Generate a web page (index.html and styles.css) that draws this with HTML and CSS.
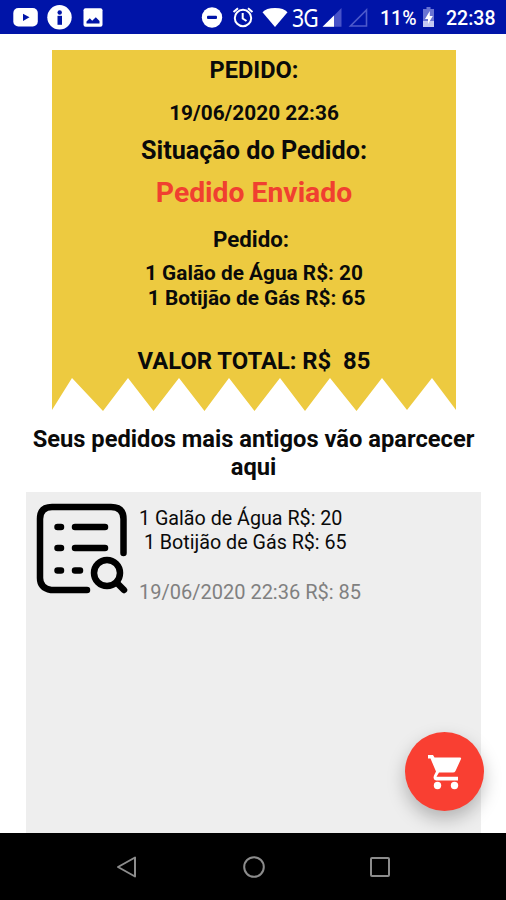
FILE: index.html
```
<!DOCTYPE html>
<html lang="pt-BR">

<head>
    <meta charset="UTF-8">
    <meta name="viewport" content="width=device-width, initial-scale=1.0">
    <title>Pedidos</title>
    <link rel="stylesheet" href="styles.css">
</head>

<body>
    <div class="app">
        <header class="status-bar">
            <svg class="status-left" width="110" height="34" viewBox="0 0 110 34">
                <rect x="13.3" y="8" width="24.5" height="18.5" rx="5" fill="#fff"/>
                <path d="M23 13.7v7.2l6.5-3.6z" fill="#0014a8"/>
                <circle cx="59.5" cy="17.3" r="12.2" fill="#fff"/>
                <circle cx="59.7" cy="12.5" r="2.2" fill="#0014a8"/>
                <path d="M57.5 15.8h4.5v9h-4.5z" fill="#0014a8"/>
                <rect x="83.5" y="8.3" width="19" height="18.5" rx="2" fill="#fff"/>
                <path d="M86.5 23.5v-2l3.3-3.2 2.4 2.4 3.6-3.4 3.7 3.7v2.5z" fill="#0014a8"/>
            </svg>

            <div class="status-right">
                <svg width="88" height="34" viewBox="200 0 88 34">
                    <circle cx="212" cy="17.5" r="10.2" fill="#fff"/>
                    <rect x="207" y="15.8" width="10" height="3.2" rx="1" fill="#0014a8"/>
                    <g fill="none" stroke="#fff" stroke-width="2">
                        <circle cx="243" cy="18" r="8.2"/>
                        <path d="M233.5 12l4.5-3.8M252.5 12l-4.5-3.8"/>
                        <path d="M242.7 13v5.5l3.8 2.5"/>
                    </g>
                    <path d="M275 27L262.5 12.3Q266 8 275 8T287.5 12.3Z" fill="#fff"/>
                </svg>
                <span class="network">3G</span>
                <svg class="signal" width="50" height="34" viewBox="320 0 50 34">
                    <path d="M341.5 8v18.7H323z" fill="#4853c8"/>
                    <path d="M334 15.6v11.1H322.5z" fill="#fff"/>
                    <path d="M366.5 10v16h-16z" fill="none" stroke="#4d5acb" stroke-width="1.6"/>
                </svg>
                <span class="battery-level">11%</span>
                <svg class="battery" width="12" height="34" viewBox="423 0 12 34">
                    <path d="M426.5 7h4v2h3.5v18h-11v-18h3.5z" fill="#6974d3"/>
                    <path d="M423 21h11v6h-11z" fill="#c4c9f2"/>
                    <path d="M429.8 11l-4.8 8h3v5l4.800-8h-3z" fill="#fff"/>
                </svg>
                <span class="clock">22:38</span>
            </div>
        </header>

        <main class="content">
            <section class="receipt">
                <h1 class="title">PEDIDO:</h1>
                <p class="date">19/06/2020 22:36</p>
                <h2 class="status-label">Situação do Pedido:</h2>
                <p class="status">Pedido Enviado</p>
                <h3 class="items-label">Pedido:</h3>
                <p class="items">1 Galão de Água R$: 20
 1 Botijão de Gás R$: 65</p>
                <p class="total">VALOR TOTAL: R$  85</p>
            </section>

            <h2 class="old-orders">Seus pedidos mais antigos vão aparcecer aqui</h2>

            <section class="order-list">
                <article class="order">
                    <svg class="order-icon" width="92" height="92" viewBox="0 0 92 92">
                        <g fill="none" stroke="#000" stroke-width="6.5" stroke-linecap="round">
                            <path d="M51 87H15Q4 85 4 75V16Q4 4 16 4H75Q87.5 4 87.5 16V50"/>
                            <path d="M21.5 24h3.5M39 24h30M21.5 45h3.5M39 45h30M21.5 67.5h3.5M39 67.5h5"/>
                            <circle cx="71" cy="70" r="13"/>
                            <path d="M81 80l7 7"/>
                        </g>
                    </svg>
                    <div class="order-info">
                        <p class="order-items">1 Galão de Água R$: 20
 1 Botijão de Gás R$: 65</p>
                        <p class="order-date">19/06/2020 22:36 R$: 85</p>
                    </div>
                </article>
            </section>
        </main>

        <button class="cart-button" aria-label="Carrinho">
            <svg width="36" height="36" viewBox="0 0 36 36" fill="#fff">
                <path d="M1 1h5l1.5 2.5H33q1.500 0 1 1.500L28.500 17q-.8 1.500-2.500 1.500H12L9.500 22.800H31V26.500H9Q5.500 26 7 21.500L9 17.500 3.500 4.500H1z"/>
                <circle cx="10.5" cy="31.5" r="3.7"/>
                <circle cx="27.5" cy="31.5" r="3.7"/>
            </svg>
        </button>

        <nav class="nav-bar">
            <svg width="22" height="24" viewBox="0 0 22 24">
                <path d="M19 2.5v19L2 12z"/>
            </svg>
            <svg width="24" height="24" viewBox="0 0 24 24">
                <circle cx="12" cy="12" r="9.8"/>
            </svg>
            <svg width="22" height="24" viewBox="0 0 22 24">
                <rect x="2" y="3" width="18" height="18" rx="1"/>
            </svg>
        </nav>
    </div>
</body>

</html>
```
FILE: styles.css
```
* {
    box-sizing: border-box;
    margin: 0;
    padding: 0;
}

body {
    background-color: #fff;
    font-family: Roboto, sans-serif;
    color: #0a0a0a;
}

.app {
    position: relative;
    display: flex;
    flex-direction: column;
    height: 900px;
    overflow: hidden;
}

.status-bar {
    display: flex;
    justify-content: space-between;
    height: 34px;
    flex-shrink: 0;
    background-color: #0014a8;
    color: #fff;
}

.status-right {
    display: flex;
    width: 306px;
    line-height: 37px;
    font-size: 19.5px;
    font-weight: 500;
}

.network {
    width: 32px;
    padding-left: 4px;
    font-family: "Noto Sans", sans-serif;
    font-size: 25px;
    font-weight: 400;
    line-height: 34px;
    letter-spacing: -1px;
    transform: scaleX(0.85);
    transform-origin: 4px 0;
}

.battery-level {
    width: 43px;
    margin-left: 10px;
}

.clock {
    margin-left: 11px;
}

.content {
    display: flex;
    flex-direction: column;
    flex: 1;
    padding: 16px 25px 0 26px;
}

.receipt {
    width: 404px;
    height: 361px;
    margin-left: 26px;
    background-color: #edca40;
    text-align: center;
    font-weight: 700;
    /* torn paper edge */
    clip-path: polygon(0 0, 404px 0, 404px 360px, 380px 328px, 355px 360px, 330px 328px, 304.5px 361px, 278px 328px, 253px 361px, 228px 328px, 202.5px 361px, 177px 328px, 152.5px 361px, 127px 328px, 101.5px 361px, 76px 328px, 51px 361px, 20px 328px, 0 360px);
}

.title {
    font-size: 23.6px;
    line-height: 40px;
}

.date {
    font-size: 20.8px;
    line-height: 46px;
}

.status-label {
    font-size: 25.2px;
    line-height: 30px;
}

.status {
    font-size: 28.3px;
    line-height: 54px;
    color: #f04030;
}

.items-label {
    padding-right: 6px;
    font-size: 22.3px;
    line-height: 39px;
}

.items {
    margin-top: 2px;
    font-size: 20.8px;
    line-height: 25px;
    white-space: pre;
}

.total {
    margin-top: 36px;
    font-size: 23.8px;
    line-height: 28px;
    white-space: pre;
}

.old-orders {
    margin-top: 14px;
    font-size: 23.7px;
    font-weight: 700;
    line-height: 28px;
    text-align: center;
}

.order-list {
    flex: 1;
    margin-top: 11px;
    background-color: #eee;
}

.order {
    display: flex;
    gap: 11px;
    padding: 11px 10px;
}

.order-info {
    padding-top: 4px;
}

.order-items {
    font-size: 19.7px;
    line-height: 23.5px;
    white-space: pre;
}

.order-date {
    margin-top: 26px;
    font-size: 20px;
    line-height: 25px;
    color: #808080;
}

.cart-button {
    position: absolute;
    right: 22px;
    bottom: 89px;
    display: flex;
    align-items: center;
    justify-content: center;
    width: 79px;
    height: 79px;
    border: 0;
    border-radius: 50%;
    background-color: #f93f32;
    box-shadow: 0 8px 18px rgba(0, 0, 0, 0.25);
}

.nav-bar {
    position: relative;
    display: flex;
    align-items: center;
    justify-content: space-between;
    flex-shrink: 0;
    height: 67px;
    padding: 0 115px 0 116px;
    background-color: #000;
}

.nav-bar svg {
    fill: none;
    stroke: #8c8c8c;
    stroke-width: 2;
    stroke-linejoin: round;
}
```
